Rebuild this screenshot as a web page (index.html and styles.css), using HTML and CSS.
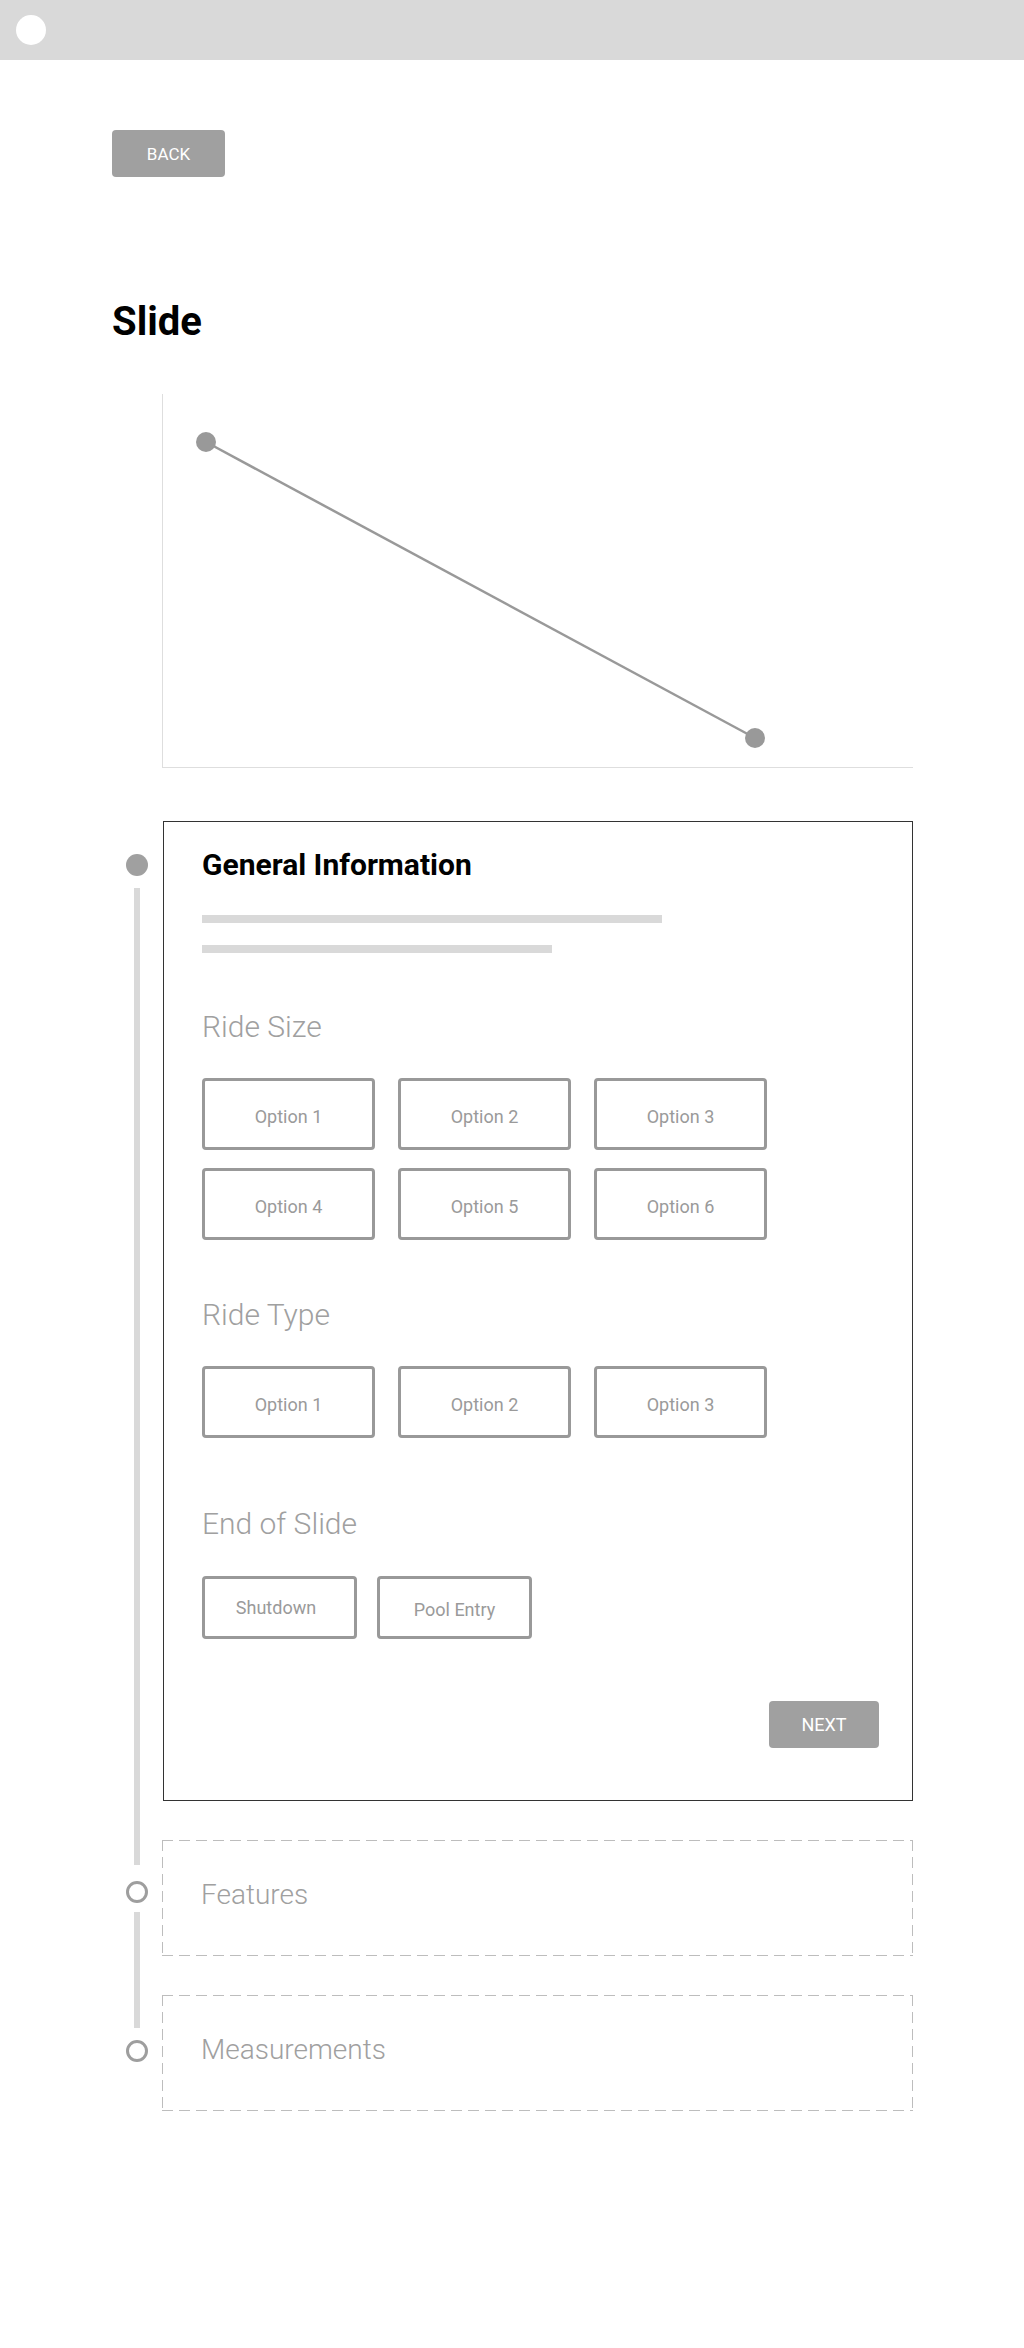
FILE: index.html
```html
<!DOCTYPE html>
<html lang="en">
<head>
<meta charset="utf-8">
<title>Slide</title>
<link rel="stylesheet" href="styles.css">
</head>
<body>
<header class="topbar"><span class="avatar"></span></header>
<main class="page">
  <button class="btn btn-back">BACK</button>
  <h1 class="title">Slide</h1>
  <div class="chart">
    <svg width="751" height="374" viewBox="0 0 751 374" xmlns="http://www.w3.org/2000/svg">
      <line x1="0.5" y1="0" x2="0.5" y2="374" stroke="#dedede" stroke-width="1"/>
      <line x1="0" y1="373.5" x2="751" y2="373.5" stroke="#dedede" stroke-width="1"/>
      <line x1="44" y1="48" x2="593" y2="344" stroke="#999" stroke-width="2.5"/>
      <circle cx="44" cy="48" r="10" fill="#999"/>
      <circle cx="593" cy="344" r="10" fill="#999"/>
    </svg>
  </div>
  <div class="steps">
    <div class="marker marker-1"><span class="dot dot-filled"></span><span class="bar"></span></div>
    <section class="card">
      <h2 class="card-title">General Information</h2>
      <div class="skeleton skeleton-long"></div>
      <div class="skeleton skeleton-short"></div>
      <h3 class="group-label">Ride Size</h3>
      <div class="options">
        <div class="option">Option 1</div>
        <div class="option">Option 2</div>
        <div class="option">Option 3</div>
        <div class="option">Option 4</div>
        <div class="option">Option 5</div>
        <div class="option">Option 6</div>
      </div>
      <h3 class="group-label">Ride Type</h3>
      <div class="options">
        <div class="option">Option 1</div>
        <div class="option">Option 2</div>
        <div class="option">Option 3</div>
      </div>
      <h3 class="group-label group-label-end">End of Slide</h3>
      <div class="options-small">
        <div class="option option-small option-shutdown">Shutdown</div>
        <div class="option option-small">Pool Entry</div>
      </div>
      <div class="card-actions"><button class="btn btn-next">NEXT</button></div>
    </section>
    <div class="marker marker-2"><span class="dot dot-hollow"></span><span class="bar"></span></div>
    <div class="step-box">Features</div>
    <div class="marker marker-3"><span class="dot dot-hollow"></span></div>
    <div class="step-box">Measurements</div>
  </div>
</main>
</body>
</html>
```

FILE: styles.css
```css
* { box-sizing: border-box; }
html, body { margin: 0; padding: 0; background: #fff; }
body { font-family: Roboto, "Liberation Sans", sans-serif; color: #000; }

.topbar {
  height: 60px;
  background: #d9d9d9;
  display: flex;
  align-items: center;
  padding-left: 16px;
}
.avatar {
  width: 30px;
  height: 30px;
  border-radius: 50%;
  background: #fff;
}

.page {
  padding-left: 112px;
  display: flex;
  flex-direction: column;
  align-items: flex-start;
}

.btn {
  border: none;
  background: #a0a0a0;
  color: #fff;
  font-family: Roboto, "Liberation Sans", sans-serif;
  font-size: 18px;
  font-weight: 400;
  border-radius: 4px;
  padding: 0;
  display: flex;
  align-items: center;
  justify-content: center;
}
.btn-back {
  margin-top: 70px;
  width: 113px;
  height: 47px;
  font-size: 17px;
}

.title {
  margin: 121px 0 0;
  font-size: 40px;
  line-height: 48px;
  font-weight: 700;
}

.chart {
  margin-top: 48px;
  margin-left: 50px;
  height: 374px;
}
.chart svg { display: block; }

.steps {
  margin-top: 53px;
  display: grid;
  grid-template-columns: 50px 751px;
  row-gap: 39px;
}

.marker {
  display: flex;
  flex-direction: column;
  align-items: center;
}
.marker-1 { padding-top: 33px; }
.marker-2 { padding-top: 41px; }
.marker-3 { padding-top: 45px; }

.dot {
  width: 22px;
  height: 22px;
  border-radius: 50%;
  flex: none;
}
.dot-filled { background: #a0a0a0; }
.dot-hollow { border: 3px solid #9e9e9e; background: #fff; }

.bar {
  width: 6px;
  flex: 1 1 0;
  background: #d9d9d9;
}
.marker-1 .bar { margin-top: 12px; margin-bottom: -64px; }
.marker-2 .bar { margin-top: 9px; margin-bottom: -72px; }

.card {
  margin-left: 1px;
  border: 1px solid #333;
  padding: 26px 33px 52px 38px;
  display: flex;
  flex-direction: column;
  align-items: flex-start;
}
.card-title {
  margin: 0;
  font-size: 30px;
  line-height: 34px;
  font-weight: 700;
}
.skeleton {
  height: 8px;
  background: #d9d9d9;
}
.skeleton-long { width: 460px; margin-top: 33px; }
.skeleton-short { width: 350px; margin-top: 22px; }

.group-label {
  margin: 58px 0 0;
  font-size: 30px;
  line-height: 34px;
  font-weight: 300;
  color: #a0a0a0;
}
.skeleton-short + .group-label { margin-top: 57px; }
.options + .group-label { margin-top: 58px; }
.options + .group-label-end { margin-top: 69px; }

.options {
  margin-top: 34px;
  display: grid;
  grid-template-columns: repeat(3, 173px);
  column-gap: 23px;
  row-gap: 18px;
}

.option {
  height: 72px;
  border: 3px solid #999;
  border-radius: 4px;
  display: flex;
  align-items: center;
  justify-content: center;
  padding-top: 5px;
  font-size: 18px;
  font-weight: 400;
  color: #9a9a9a;
}

.options-small {
  margin-top: 35px;
  display: flex;
  gap: 20px;
}
.option-small {
  width: 155px;
  height: 63px;
  padding-top: 3px;
}
.option-shutdown {
  padding-top: 0;
  padding-right: 7px;
}

.card-actions {
  margin-top: 62px;
  align-self: stretch;
  display: flex;
  justify-content: flex-end;
}
.btn-next {
  width: 110px;
  height: 47px;
}

.step-box {
  height: 116px;
  display: flex;
  align-items: center;
  padding: 0 0 6px 39px;
  font-size: 28px;
  line-height: 34px;
  font-weight: 300;
  color: #a0a0a0;
  width: 751px;
  background:
    repeating-linear-gradient(90deg, #bdbdbd 0 11px, transparent 11px 17px) left top / 100% 1px no-repeat,
    repeating-linear-gradient(90deg, #bdbdbd 0 11px, transparent 11px 17px) left bottom / 100% 1px no-repeat,
    repeating-linear-gradient(180deg, #bdbdbd 0 11px, transparent 11px 17px) left top / 1px 100% no-repeat,
    repeating-linear-gradient(180deg, #bdbdbd 0 11px, transparent 11px 17px) right top / 1px 100% no-repeat;
}
```
